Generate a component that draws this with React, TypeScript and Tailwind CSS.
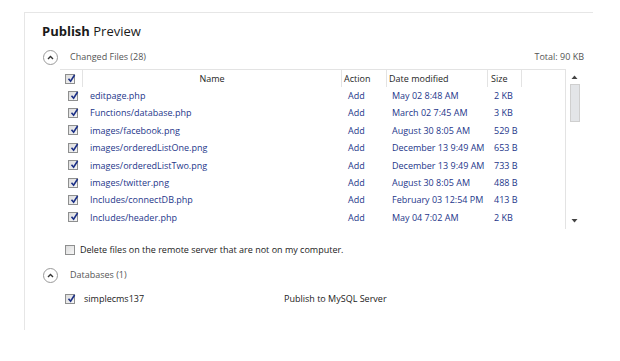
import React from "react";

const font = { fontFamily: '"Open Sans", "Noto Sans", sans-serif' };

function Check({ checked = true }: { checked?: boolean }) {
  return (
    <span className="relative inline-flex h-[10px] w-[10px] shrink-0 items-center justify-center border border-[#8e8f8f] bg-gradient-to-br from-[#dcdcdc] to-[#f6f6f6]">
      {checked && (
        <svg width="9" height="9" viewBox="0 0 9 9" className="absolute left-[1px] top-[-1px]">
          <path d="M1.5 4.8 L3.6 7.2 L7.6 1" fill="none" stroke="#1b2f86" strokeWidth="1.6" />
        </svg>
      )}
    </span>
  );
}

function Collapse() {
  return (
    <span className="flex h-[15px] w-[15px] items-center justify-center rounded-full border border-[#9a9a9a] bg-white">
      <svg width="7" height="5" viewBox="0 0 7 5">
        <path d="M1 4 L3.5 1.5 L6 4" fill="none" stroke="#333" strokeWidth="1.4" />
      </svg>
    </span>
  );
}

const rows = [
  ["editpage.php", "May 02 8:48 AM", "2 KB"],
  ["Functions/database.php", "March 02 7:45 AM", "3 KB"],
  ["images/facebook.png", "August 30 8:05 AM", "529 B"],
  ["images/orderedListOne.png", "December 13 9:49 AM", "653 B"],
  ["images/orderedListTwo.png", "December 13 9:49 AM", "733 B"],
  ["images/twitter.png", "August 30 8:05 AM", "488 B"],
  ["Includes/connectDB.php", "February 03 12:54 PM", "413 B"],
  ["Includes/header.php", "May 04 7:02 AM", "2 KB"],
];

export default function App() {
  return (
    <div className="h-[361px] w-[620px] overflow-hidden whitespace-nowrap bg-white pl-[24px] pt-[12px]" style={font}>
      <div className="h-[318px] w-[569px] border-l border-t border-[#e6e6e6]">
        <div className="pl-[17px] pt-[8px] text-[13px] leading-[20px] text-[#1a1a1a]">
          <span className="font-bold">Publish</span> Preview
        </div>
        <div className="mt-[8px] flex h-[16px] items-center pl-[18px] pr-[9px] text-[9px] text-[#555]">
          <Collapse />
          <span className="ml-[12px]">Changed Files (28)</span>
          <span className="ml-auto">Total: 90 KB</span>
        </div>
        <div className="ml-[35px] mt-[4px] flex h-[160px]">
          <div className="w-[506px] border-r border-t border-[#e3e3e3]">
            <div className="flex h-[17px] items-center text-[9px] text-[#1e1e1e]">
              <div className="flex h-full w-[23px] items-center border-r border-[#e3e3e3] pl-[5px]">
                <Check />
              </div>
              <div className="flex h-full w-[259px] items-center justify-center border-r border-[#e3e3e3]">Name</div>
              <div className="flex h-full w-[45px] items-center border-r border-[#e3e3e3] pl-[2px]">Action</div>
              <div className="flex h-full w-[101px] items-center border-r border-[#e3e3e3] pl-[2px]">Date modified</div>
              <div className="flex h-full w-[34px] items-center border-r border-[#e3e3e3] pl-[3px]">Size</div>
            </div>
            {rows.map(([name, date, size]) => (
              <div key={name} className="flex h-[17.4px] items-center text-[9px] text-[#24368a]">
                <div className="flex w-[23px] pl-[8px]">
                  <Check />
                </div>
                <div className="w-[259px] pl-[7px]">{name}</div>
                <div className="w-[45px] pl-[6px]">Add</div>
                <div className="w-[101px] pl-[5px]">{date}</div>
                <div className="w-[34px] pl-[6px]">{size}</div>
              </div>
            ))}
          </div>
          <div className="flex w-[17px] flex-col items-center">
            <svg width="7" height="4" viewBox="0 0 7 4" className="mt-[6px]">
              <path d="M0.5 4 L3.5 0.5 L6.5 4 Z" fill="#444" />
            </svg>
            <div className="mt-[5px] h-[38px] w-[10px] border border-[#cfcfcf] bg-[#e3e5e8]" />
            <svg width="7" height="4" viewBox="0 0 7 4" className="mt-auto mb-[6px]">
              <path d="M0.5 0 L3.5 3.5 L6.5 0 Z" fill="#444" />
            </svg>
          </div>
        </div>
        <div className="mt-[15px] flex h-[12px] items-center pl-[40px] text-[9px] text-[#222]">
          <Check checked={false} />
          <span className="ml-[5px]">Delete files on the remote server that are not on my computer.</span>
        </div>
        <div className="mt-[11px] flex h-[16px] items-center pl-[18px] text-[9px] text-[#555]">
          <Collapse />
          <span className="ml-[12px]">Databases (1)</span>
        </div>
        <div className="mt-[10px] flex h-[12px] items-center pl-[40px] text-[9px] text-[#222]">
          <Check />
          <span className="ml-[9px] w-[200px] shrink-0">simplecms137</span>
          <span className="shrink-0">Publish to MySQL Server</span>
        </div>
      </div>
    </div>
  );
}
